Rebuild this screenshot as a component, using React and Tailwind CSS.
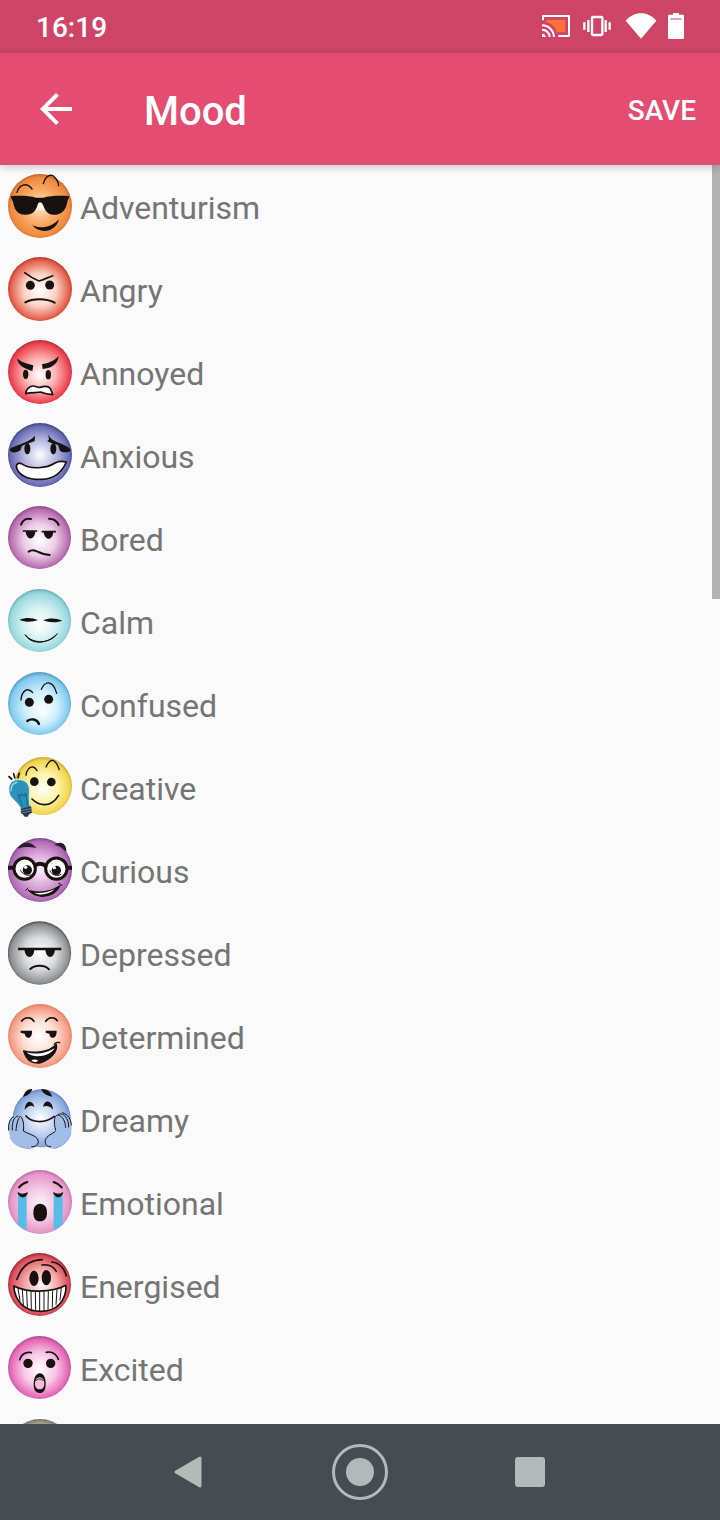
import React from 'react';

const INK = '#17120f';

/* Each drawing lives on a 192-unit square whose origin is (24, top). */
const line = (width, color = INK) => ({
  fill: 'none',
  stroke: color,
  strokeWidth: width,
  strokeLinecap: 'round',
  strokeLinejoin: 'round',
});

const moods = [
  {
    name: 'Adventurism', top: 27, cx: 120, cy: 123, r: 96,
    glow: ['#ffe9cf', '#f9ad68', '#ee883c', '#b9581d'], fx: 0.5, fy: 0.5,
    art: (
      <>
        <path d="M51 82C57 62 78 48 96 72M130 56C136 34 150 26 161 34C170 40 174 50 176 62" {...line(4)} />
        <path d="M112 122L120 112L130 122L136 136H106Z" fill="#fff4e4" />
        <path d="M32 94C60 91 88 93 108 98H130C150 93 180 91 208 94L205 103C202 106 202 112 200 119C194 143 176 150 160 149C142 148 136 137 130 122C127 114 124 112 120 112C116 112 114 115 112 122C106 138 98 149 78 149C58 150 46 140 41 119C39 111 38 106 35 103Z" fill={INK} />
        <path d="M97 181C119 191 151 191 177 163C166 205 118 207 97 181Z" fill={INK} />
      </>
    ),
  },
  {
    name: 'Angry', top: 276, cx: 120, cy: 372, r: 96,
    glow: ['#ffffff', '#fbd3c4', '#e4604c', '#a2342a'], fx: 0.5, fy: 0.52,
    art: (
      <>
        <path d="M74 323C88 334 102 342 117 348C132 344 144 337 158 332" {...line(5)} />
        <circle cx="91" cy="361" r="13.5" fill={INK} />
        <circle cx="149" cy="360" r="13.5" fill={INK} />
        <path d="M76 412C98 400 138 399 164 413" {...line(6)} />
      </>
    ),
  },
  {
    name: 'Annoyed', top: 24, cx: 120, cy: 120, r: 96,
    glow: ['#ffffff', '#fbb0ae', '#ee4552', '#a8242f'], fx: 0.5, fy: 0.55,
    art: (
      <>
        <path d="M51 79C64 92 82 95 100 100L97 117C78 111 55 105 51 79Z" fill={INK} />
        <path d="M176 71C164 88 144 92 126 97L128 111C151 108 174 99 176 71Z" fill={INK} />
        <ellipse cx="77" cy="127" rx="8" ry="14" fill={INK} />
        <ellipse cx="145" cy="128" rx="8" ry="14" fill={INK} />
        <path d="M77 185C78 173 87 163 98 162C107 161 111 167 120 166C130 163 145 160 151 170C154 176 157 181 158 188C143 187 133 185 122 180C109 183 95 180 77 185Z" {...line(5)} fill="#fff" />
      </>
    ),
  },
  {
    name: 'Anxious', top: 273, cx: 120, cy: 369, r: 96,
    glow: ['#ffffff', '#b3b5df', '#696db5', '#303473'], fx: 0.5, fy: 0.5,
    art: (
      <>
        <path d="M105 311C90 326 75 331 57 338C42 344 31 347 29 354C34 365 52 362 61 355L66 341C82 335 95 331 104 327Z" fill={INK} />
        <path d="M144 307C151 322 164 328 180 334C195 341 210 346 212 356C204 363 188 362 180 356L174 339C161 335 150 333 142 328L147 322Z" fill={INK} />
        <ellipse cx="82" cy="350" rx="9" ry="17" fill={INK} />
        <ellipse cx="160" cy="350" rx="9" ry="17" fill={INK} />
        <path d="M49 405C49 396 55 391 64 395C91 414 141 409 165 393C178 386 190 388 199 390C186 420 161 441 126 442C87 444 55 431 49 405Z" {...line(5)} fill="#fff" />
      </>
    ),
  },
  {
    name: 'Bored', top: 24, cx: 118.5, cy: 118.5, r: 94.5,
    glow: ['#ffffff', '#ebcde6', '#b96eb0', '#7d457b'], fx: 0.5, fy: 0.55,
    art: (
      <>
        <path d="M63 80C68 66 80 60 93 63M147 62C161 62 171 69 176 81" {...line(6)} />
        <path d="M70 99H110M127 101H166" {...line(5)} />
        <path d="M77 100H106C105 128 79 129 77 100ZM131 102H160C158 129 134 129 131 102Z" fill={INK} />
        <path d="M86 161C94 155 106 157 115 162C127 168 137 170 149 171" {...line(6)} />
      </>
    ),
  },
  {
    name: 'Calm', top: 273, cx: 118.5, cy: 367.5, r: 94.5,
    glow: ['#ffffff', '#d6f1f3', '#97d9dd', '#64a1aa'], fx: 0.5, fy: 0.58,
    art: (
      <>
        <path d="M58 365C78 358 95 358 114 366C94 373 78 373 58 365ZM129 367C148 360 167 360 187 368C166 375 149 374 129 367Z" fill={INK} />
        <path d="M76 411C91 438 137 443 172 407C151 437 100 440 76 411Z" {...line(3)} fill={INK} />
      </>
    ),
  },
  {
    name: 'Confused', top: 24, cx: 118.5, cy: 118.5, r: 94.5,
    glow: ['#ffffff', '#d1effc', '#83cbef', '#4a8cb5'], fx: 0.55, fy: 0.62,
    art: (
      <>
        <path d="M63 108C65 80 83 68 98 86M124 76C132 57 145 51 157 62C166 70 166 79 170 88" {...line(4)} />
        <circle cx="88" cy="115" r="13.5" fill={INK} />
        <circle cx="146" cy="106" r="13.5" fill={INK} />
        <path d="M82 171C92 163 111 164 117 180" {...line(7)} />
      </>
    ),
  },
  {
    name: 'Creative', top: 273, cx: 129, cy: 366, r: 87,
    glow: ['#ffffff', '#fff3a8', '#f0d54e', '#bd9b26'], fx: 0.5, fy: 0.55,
    art: (
      <>
        <path d="M78 334C79 318 90 307 99 309C106 311 109 315 111 320M138 309C144 295 151 288 159 289C169 292 173 304 178 317" {...line(4)} />
        <circle cx="103" cy="353" r="13" fill={INK} />
        <circle cx="154" cy="354" r="13" fill={INK} />
        <path d="M96 405C119 428 153 431 176 394" {...line(5)} />
        <path d="M27 338L35 345M41 329L44 341M58 328L54 341" {...line(5)} />
        <path d="M27 378C25 358 38 348 55 347C76 346 88 360 88 377C88 401 86 415 92 430L64 437C58 424 48 414 39 405C31 397 27 390 27 378Z" fill="#2b93bb" stroke="#f4fbfb" strokeWidth="2" />
        <path d="M33 380C33 365 41 356 51 355" {...line(4, '#a9e4ef')} />
        <path d="M68 428L54 391L63 397L66 389L72 397L78 387L82 425" {...line(2, '#17455c')} />
        <path d="M62 434L93 427L96 446L87 451L83 458H74L68 451L63 448Z" fill="#273947" />
        <path d="M63 440L94 434M66 447L94 441" {...line(2, '#86a4ae')} />
      </>
    ),
  },
  {
    name: 'Curious', top: 24, cx: 120, cy: 120, r: 96,
    glow: ['#fbeefa', '#dcaadb', '#b06cb4', '#74397c'], fx: 0.5, fy: 0.5,
    art: (
      <>
        <path d="M55 52C69 33 93 34 110 54C90 51 73 49 55 56ZM163 45C179 32 200 38 199 65C190 60 188 49 163 45Z" fill="#2a1b2a" />
        <path d="M24 113H42M102 109C112 99 128 99 138 109M198 113H216" {...line(12)} strokeLinecap="butt" />
        <circle cx="74" cy="116" r="32" fill="#fff" stroke={INK} strokeWidth="9" />
        <circle cx="169" cy="116" r="32" fill="#fff" stroke={INK} strokeWidth="9" />
        <circle cx="82" cy="120" r="14" fill={INK} />
        <circle cx="169" cy="121" r="14" fill={INK} />
        <circle cx="77" cy="112" r="5" fill="#fff" />
        <circle cx="163" cy="113" r="5" fill="#fff" />
        <path d="M62 122C69 133 80 138 94 135M150 123C156 136 171 140 183 133" {...line(3)} />
        <path d="M81 178C109 189 151 187 183 163C170 207 106 213 81 178Z" fill={INK} />
        <path d="M102 188C120 191 145 188 164 177C148 194 120 198 102 188Z" fill="#fff" />
        <path d="M77 181C79 178 82 176 84 174M176 160C181 160 184 163 186 167" {...line(3)} />
      </>
    ),
  },
  {
    name: 'Depressed', top: 273, cx: 118.5, cy: 369, r: 95,
    glow: ['#ffffff', '#dadbdd', '#8f9093', '#3d3d3f'], fx: 0.52, fy: 0.5,
    art: (
      <>
        <path d="M54 357H184" {...line(8)} strokeLinecap="butt" />
        <path d="M73 357H103C103 388 75 389 73 357ZM136 357H165C164 388 137 389 136 357Z" fill={INK} />
        <path d="M91 417C104 404 134 404 147 418" {...line(6)} />
      </>
    ),
  },
  {
    name: 'Determined', top: 24, cx: 120, cy: 120, r: 96,
    glow: ['#ffffff', '#fde0d4', '#f59b83', '#d9785f'], fx: 0.47, fy: 0.5,
    art: (
      <>
        <path d="M65 75C76 61 94 63 102 76M137 76C145 63 163 61 172 74" {...line(5)} />
        <path d="M62 104H96C98 130 77 131 74 113L62 110ZM137 104H170C171 131 149 131 148 113L137 110Z" fill={INK} />
        <path d="M71 165C101 173 147 169 169 145C174 165 152 192 119 201C95 203 78 189 71 165Z" {...line(4)} fill={INK} />
        <path d="M79 169C106 177 143 171 164 156C154 178 103 192 79 169Z" fill="#fff" />
        <path d="M94 193C102 189 109 190 115 194L108 198C101 199 97 196 94 193Z" fill="#fff" />
        <path d="M163 145C167 139 173 138 179 140" {...line(4)} />
      </>
    ),
  },
  {
    name: 'Dreamy', top: 273, cx: 125, cy: 367, r: 87,
    glow: ['#ffffff', '#c3d4f2', '#86a7dc', '#5879b8'], fx: 0.47, fy: 0.5,
    art: (
      <>
        <path d="M69 303C73 287 84 278 97 279C94 292 82 298 69 303ZM124 279C141 278 153 289 157 302C141 299 129 294 124 279Z" fill={INK} />
        <path d="M74 342C76 309 100 311 103 334C95 326 84 329 74 342ZM129 332C134 307 158 313 159 341C150 330 140 328 129 332Z" fill={INK} />
        <path d="M78 360C95 380 134 384 163 361" {...line(5)} />
        <path d="M25 402C24 380 30 364 40 361C49 352 57 355 62 361C73 366 73 386 71 404C88 415 108 416 114 432C119 450 104 459 84 458C56 456 36 440 30 420Z" fill="#a3bde9" />
        <path d="M30 424C38 445 60 457 90 457" {...line(2, '#6b8fcc')} />
        <path d="M215 392C216 374 202 356 189 350C178 347 167 355 164 372L167 404C154 413 140 418 135 432C131 449 145 458 163 458C192 453 212 428 214 406Z" fill="#a3bde9" />
        <path d="M212 412C206 434 190 452 163 457" {...line(2, '#6b8fcc')} />
        <path d="M37 402C35 378 42 362 54 360M48 404C49 384 54 368 61 361C71 370 72 388 70 405C85 415 108 417 114 432C118 446 106 453 95 452M26 402C24 382 31 366 41 362" {...line(3)} />
        <path d="M167 402C160 378 162 358 174 357C188 360 196 376 197 394M176 355C184 347 207 362 206 393M188 350C203 355 214 370 214 387M166 406C156 415 140 418 136 433C134 447 144 453 152 452" {...line(3)} />
      </>
    ),
  },
  {
    name: 'Emotional', top: 24, cx: 120, cy: 120, r: 96,
    glow: ['#fff6fb', '#f3c6e2', '#e596c8', '#b0609a'], fx: 0.5, fy: 0.55,
    art: (
      <>
        <path d="M54 97H80V205C70 201 62 195 54 189ZM161 97H188V187C180 194 171 200 161 205Z" fill="#58bce9" />
        <path d="M57 76C65 67 73 62 82 60M161 60C170 63 179 68 185 76" {...line(6)} />
        <path d="M54 92C62 98 73 98 82 92C79 109 59 109 54 92ZM161 92C170 98 180 98 188 92C184 109 165 109 161 92Z" fill={INK} stroke={INK} strokeWidth="3" />
        <path d="M120 125C134 125 141 136 141 152C141 168 134 178 120 178C106 178 100 168 100 152C100 136 107 125 120 125Z" fill={INK} />
      </>
    ),
  },
  {
    name: 'Energised', top: 273, cx: 118.5, cy: 367.5, r: 94.5,
    glow: ['#ffffff', '#f4aaa9', '#db4c5a', '#7a1f29'], fx: 0.55, fy: 0.5,
    art: (
      <>
        <path d="M51 352C62 318 84 294 127 293M126 309C145 306 160 313 169 328M155 300C178 302 193 319 199 342" {...line(5)} />
        <ellipse cx="102" cy="349" rx="14" ry="23" fill={INK} />
        <ellipse cx="139" cy="347" rx="14" ry="23" fill={INK} />
        <path d="M41 372C82 393 153 393 198 370C199 416 171 447 124 448C74 448 45 419 41 372Z" {...line(5)} fill="#fff" />
        <path d="M54 380L60 415M67 384L70 428M80 387L82 436M93 389L94 442M106 390L107 445M119 391V446M132 390V445M145 389L144 442M158 386L157 436M171 383L168 427M184 378L180 414" {...line(3)} />
      </>
    ),
  },
  {
    name: 'Excited', top: 33, cx: 118.5, cy: 127.5, r: 94.5,
    glow: ['#ffffff', '#fac7e7', '#e568b6', '#a34483'], fx: 0.5, fy: 0.53,
    art: (
      <>
        <path d="M59 104C65 87 78 80 94 83M139 82C158 78 169 88 175 103" {...line(5)} />
        <circle cx="84" cy="115" r="14" fill={INK} />
        <circle cx="152" cy="115" r="14" fill={INK} />
        <path d="M119 145C133 145 138 163 137 179C136 196 130 204 119 204C107 204 101 195 101 178C101 160 107 145 119 145Z" fill={INK} />
        <path d="M119 157C128 157 133 166 133 176C133 186 128 193 119 193C110 193 105 186 105 176C105 166 110 157 119 157Z" fill="#f6bce0" />
        <path d="M108 167C113 160 125 160 130 167" {...line(3)} />
      </>
    ),
  },
];

const partial = {
  name: '', top: 282, cx: 120, cy: 378, r: 96,
  glow: ['#ffffff', '#cfccbf', '#9b9887', '#6b6858'], fx: 0.5, fy: 0.5, art: null,
};

function Face({ mood, id }) {
  const [core, mid, outer, rim] = mood.glow;
  return (
    <svg className="size-16 shrink-0" viewBox={`24 ${mood.top} 192 192`} aria-hidden="true">
      <defs>
        <radialGradient id={`glow-${id}`} cx="0.5" cy="0.515" r="0.53" fx={mood.fx} fy={mood.fy}>
          <stop offset="0" stopColor={core} />
          <stop offset="0.48" stopColor={mid} />
          <stop offset="0.87" stopColor={outer} />
          <stop offset="1" stopColor={rim} />
        </radialGradient>
      </defs>
      <circle cx={mood.cx} cy={mood.cy} r={mood.r} fill={`url(#glow-${id})`} />
      {mood.art}
    </svg>
  );
}

function StatusBar() {
  return (
    <div className="flex h-[53px] shrink-0 items-center justify-between bg-[#cf4568] pr-[35px] pl-9 text-white">
      <span className="pt-0.5 text-[28px] leading-8 font-medium">16:19</span>
      <div className="flex items-center gap-[10px]">
        <svg className="h-[29px] w-[31px]" viewBox="123 36 93 87" aria-hidden="true">
          <path d="M139 59H196V97H170C166 80 154 70 139 67Z" fill="#ff7138" />
          <path d="M129 61V48H207V108H175" fill="none" stroke="#fff" strokeWidth="6" strokeLinejoin="round" />
          <path d="M126 76A36 36 0 0 1 162 111M126 89A23 23 0 0 1 149 111" fill="none" stroke="#fff" strokeWidth="6" />
          <path d="M126 101A11 11 0 0 1 137 111H126Z" fill="#fff" />
        </svg>
        <svg className="h-[29px] w-[33px]" viewBox="246 36 99 87" fill="none" stroke="#fff" aria-hidden="true">
          <rect x="276" y="51" width="31" height="54" rx="3" strokeWidth="7" />
          <path d="M265 60V96M317 60V96" strokeWidth="7" />
          <path d="M253 67V89M329 67V89" strokeWidth="7" />
        </svg>
        <svg className="h-[29px] w-8" viewBox="375 36 96 87" aria-hidden="true">
          <path d="M377 62C402 32 444 32 469 62L423 116Z" fill="#fff" />
        </svg>
        <svg className="h-[29px] w-[18px]" viewBox="501 36 54 87" aria-hidden="true">
          <path d="M519 39H537V44H549Q552 44 552 48V113Q552 117 548 117H508Q504 117 504 113V48Q504 44 508 44H519Z" fill="#fff" />
          <path d="M511 57H545" stroke="#cf4568" strokeWidth="3" />
        </svg>
      </div>
    </div>
  );
}

function AppBar() {
  return (
    <header className="relative z-10 flex h-28 shrink-0 items-center bg-[#e54c72] pr-6 pl-8 text-white shadow-[0_2px_8px_rgba(0,0,0,0.22)]">
      <button type="button" aria-label="Back" className="size-12">
        <svg className="size-12" viewBox="0 0 24 24" fill="currentColor" aria-hidden="true">
          <path d="M20 11H7.83l5.59-5.59L12 4l-8 8 8 8 1.41-1.41L7.83 13H20v-2z" />
        </svg>
      </button>
      <h1 className="ml-16 flex-1 pt-1.5 text-[40px] leading-12 font-medium">Mood</h1>
      <button type="button" className="pt-1 text-[28px] leading-8 font-medium">SAVE</button>
    </header>
  );
}

function NavBar() {
  return (
    <nav className="flex h-24 shrink-0 items-center justify-center bg-[#454d52] text-[#b4b9ba]">
      <button type="button" aria-label="Back" className="flex w-[170px] justify-center">
        <svg className="size-8" viewBox="2 0 32 32" aria-hidden="true">
          <path d="M4 16L28 2V30Z" fill="currentColor" stroke="currentColor" strokeWidth="3" strokeLinejoin="round" />
        </svg>
      </button>
      <button type="button" aria-label="Home" className="flex w-[170px] justify-center">
        <svg className="size-14" viewBox="0 0 56 56" aria-hidden="true">
          <circle cx="28" cy="28" r="26.5" fill="none" stroke="currentColor" strokeWidth="3" />
          <circle cx="28" cy="28" r="14" fill="currentColor" />
        </svg>
      </button>
      <button type="button" aria-label="Recent apps" className="flex w-[170px] justify-center">
        <span className="size-[30px] rounded-[3px] bg-current" />
      </button>
    </nav>
  );
}

export default function App() {
  return (
    <div className="flex h-screen flex-col bg-[#fafafa] font-[Roboto,sans-serif]">
      <StatusBar />
      <AppBar />
      <main className="relative min-h-0 flex-1 overflow-hidden">
        <ul>
          {moods.map((mood, i) => (
            <li key={mood.name}>
              <button type="button" className="flex w-full items-center gap-2 px-2 pt-[9px] pb-[10px] text-left">
                <Face mood={mood} id={i} />
                <span className="pt-1 text-[32px] leading-10 text-[#757575]">{mood.name}</span>
              </button>
            </li>
          ))}
          <li className="px-2 pt-[9px] pb-[10px]">
            <Face mood={partial} id="next" />
          </li>
        </ul>
        <div className="absolute top-0 right-0 h-[34.5%] w-2 bg-[#b2b2b2]" />
      </main>
      <NavBar />
    </div>
  );
}
